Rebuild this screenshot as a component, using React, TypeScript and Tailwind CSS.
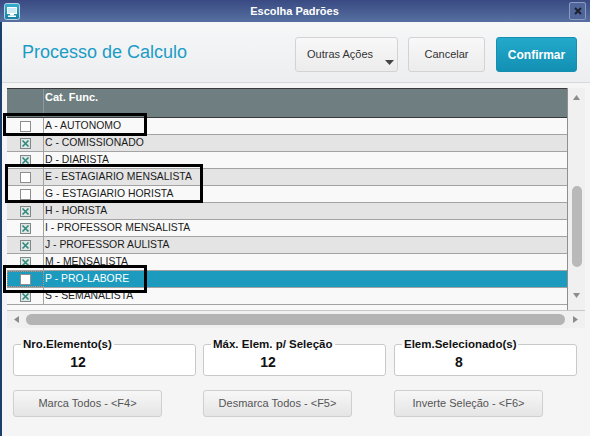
import React from "react";

type Row = { label: string; checked: boolean; selected?: boolean };

const rows: Row[] = [
  { label: "A - AUTONOMO", checked: false },
  { label: "C - COMISSIONADO", checked: true },
  { label: "D - DIARISTA", checked: true },
  { label: "E - ESTAGIARIO MENSALISTA", checked: false },
  { label: "G - ESTAGIARIO HORISTA", checked: false },
  { label: "H - HORISTA", checked: true },
  { label: "I - PROFESSOR MENSALISTA", checked: true },
  { label: "J - PROFESSOR AULISTA", checked: true },
  { label: "M - MENSALISTA", checked: true },
  { label: "P - PRO-LABORE", checked: false, selected: true },
  { label: "S - SEMANALISTA", checked: true },
];

function CheckBox({ checked }: { checked: boolean }) {
  return (
    <svg width="11" height="11" viewBox="0 0 11 11">
      <rect
        x="0.5"
        y="0.5"
        width="10"
        height="10"
        fill={checked ? "#e1e5e4" : "#ffffff"}
        stroke={checked ? "#7b8a89" : "#8e8e8e"}
      />
      {checked && (
        <path d="M2.5 2.5 L8.5 8.5 M8.5 2.5 L2.5 8.5" stroke="#2c8a7c" strokeWidth="1.6" />
      )}
    </svg>
  );
}

function WindowIcon() {
  return (
    <svg width="16" height="17" viewBox="0 0 16 17">
      <defs>
        <linearGradient id="wi" x1="0" y1="0" x2="0" y2="1">
          <stop offset="0" stopColor="#35b0cf" />
          <stop offset="1" stopColor="#1780a3" />
        </linearGradient>
      </defs>
      <rect x="0.5" y="0.5" width="15" height="16" rx="2" fill="url(#wi)" stroke="#b9d3e3" />
      <rect x="3" y="4" width="10" height="7" fill="#ffffff" />
      <rect x="4" y="5" width="8" height="5" fill="#cfeaf3" />
      <rect x="6" y="11" width="4" height="1.5" fill="#ffffff" />
      <rect x="4" y="12.5" width="8" height="1.5" fill="#ffffff" />
    </svg>
  );
}

function CloseButton() {
  return (
    <div className="w-[17px] h-[18px] rounded-[2px] border border-[#8d9abf] bg-[#50659a] flex items-center justify-center">
      <svg width="8" height="8" viewBox="0 0 8 8">
        <path d="M1 1 L7 7 M7 1 L1 7" stroke="#1c2130" strokeWidth="2" />
      </svg>
    </div>
  );
}

function Triangle({ dir }: { dir: "up" | "down" | "left" | "right" }) {
  const paths: Record<string, string> = {
    up: "M0 5 L3.5 0 L7 5 Z",
    down: "M0 0 L7 0 L3.5 5 Z",
    left: "M5 0 L5 7 L0 3.5 Z",
    right: "M0 0 L5 3.5 L0 7 Z",
  };
  const vertical = dir === "up" || dir === "down";
  return (
    <svg width={vertical ? 7 : 5} height={vertical ? 5 : 7} viewBox={vertical ? "0 0 7 5" : "0 0 5 7"}>
      <path d={paths[dir]} fill="#8c8c8c" />
    </svg>
  );
}

function CountBox({ title, value }: { title: string; value: string }) {
  return (
    <fieldset className="w-[183px] border border-[#c9c9c9] rounded-[3px] bg-white px-[7px]">
      <legend className="px-[2px] text-[11.5px] leading-[14px] font-bold text-[#111]">{title}</legend>
      <div className="-ml-[7px] w-[128px] h-[17px] mt-[3px] mb-[4px] text-center text-[14px] leading-[17px] font-bold text-[#111]">
        {value}
      </div>
    </fieldset>
  );
}

function FooterButton({ children }: { children: React.ReactNode }) {
  return (
    <div className="w-[149px] h-[27px] rounded-[3px] border border-[#cfcfcf] bg-linear-to-b from-[#f7f7f7] to-[#e5e5e5] flex items-center justify-center text-[11px] text-[#555]">
      {children}
    </div>
  );
}

export default function App() {
  return (
    <div className="relative w-[590px] h-[436px] overflow-hidden flex flex-col bg-[#f5f5f5] font-['Liberation_Sans',Arial,sans-serif]">
      {/* window title bar */}
      <div className="h-[22px] shrink-0 flex items-center px-[4px] bg-linear-to-b from-[#394a82] to-[#5770a1]">
        <WindowIcon />
        <div className="flex-1 text-center text-white font-bold text-[11px] leading-none">Escolha Padrões</div>
        <CloseButton />
      </div>

      <div className="flex-1 flex flex-col border-l-2 border-[#1c3f6e]">
        {/* page header */}
        <div className="h-[61px] shrink-0 flex items-start pt-[15px] pl-[20px] pr-[13px] bg-linear-to-b from-[#f6f7f7] to-[#eceef0] border-b border-[#d6d8d9]">
          <div className="mt-[5px] text-[18px] leading-[21px] text-[#1b9cc5]">Processo de Calculo</div>
          <div className="ml-auto flex items-start">
            <div className="relative w-[103px] h-[35px] rounded-[3px] border border-[#d3d3d3] bg-linear-to-b from-[#f8f8f8] to-[#ececec] flex items-center pl-[11px] text-[11px] text-[#333]">
              Outras Ações
              <svg className="absolute right-[3px] bottom-[6px]" width="9" height="5" viewBox="0 0 9 5">
                <path d="M0 0 L9 0 L4.5 5 Z" fill="#444" />
              </svg>
            </div>
            <div className="ml-[10px] w-[77px] h-[35px] rounded-[3px] border border-[#d3d3d3] bg-linear-to-b from-[#f8f8f8] to-[#ececec] flex items-center justify-center text-[11px] text-[#333]">
              Cancelar
            </div>
            <div className="ml-[11px] w-[81px] h-[35px] rounded-[3px] border border-[#1590b3] bg-linear-to-b from-[#23a9cb] to-[#1290b4] flex items-center justify-center text-[12px] font-bold text-white">
              Confirmar
            </div>
          </div>
        </div>

        {/* data grid */}
        <div className="ml-[5px] mt-[5px] w-[578px] flex flex-col">
          <div className="flex h-[222px]">
            <div className="w-[561px] flex flex-col border-r border-[#8f8f8f]">
              <div className="h-[30px] shrink-0 flex bg-[#6f7f81] border-t border-b border-[#3a3a3a]">
                <div className="w-[37px] border-r border-[#8c9a9b]" />
                <div className="pl-[1px] pt-[2px] text-[11px] font-bold text-white leading-[13px]">Cat. Func.</div>
              </div>
              {rows.map((r, i) => {
                const bg = r.selected ? "bg-[#1c9bbe]" : i % 2 === 0 ? "bg-[#f9f9f9]" : "bg-[#e4e4e4]";
                return (
                  <div key={r.label} className={`h-[17px] shrink-0 flex border-b border-[#a3a3a3] ${bg}`}>
                    <div
                      className={
                        r.selected
                          ? "w-[37px] flex items-center justify-center border border-dotted border-[#d9866a]"
                          : "w-[37px] flex items-center justify-center border-r border-[#a3a3a3]"
                      }
                    >
                      <CheckBox checked={r.checked} />
                    </div>
                    <div
                      className={
                        r.selected
                          ? "pl-[1px] pt-[1px] flex items-center text-[10.4px] leading-none text-white"
                          : "pl-[1px] pt-[1px] flex items-center text-[10.4px] leading-none text-[#1a1a1a]"
                      }
                    >
                      {r.label}
                    </div>
                  </div>
                );
              })}
              <div className="flex-1 bg-[#f9f9f9]" />
            </div>
            {/* vertical scrollbar */}
            <div className="w-[17px] bg-[#f0f0f0] flex flex-col items-center">
              <div className="h-[18px] flex items-center justify-center">
                <Triangle dir="up" />
              </div>
              <div className="mt-[80px] w-[10px] h-[81px] rounded-full bg-[#b9b9b9]" />
              <div className="flex-1" />
              <div className="h-[18px] mb-[6px] flex items-center justify-center">
                <Triangle dir="down" />
              </div>
            </div>
          </div>
          {/* horizontal scrollbar */}
          <div className="h-[18px] flex items-center bg-[#f0f0f0] border-t border-[#c8c8c8]">
            <div className="w-[19px] flex justify-center">
              <Triangle dir="left" />
            </div>
            <div className="w-[539px] h-[11px] rounded-full bg-[#b4b4b4]" />
            <div className="flex-1 flex justify-center">
              <Triangle dir="right" />
            </div>
          </div>
        </div>

        {/* counters */}
        <div className="ml-[11px] mt-[9px] flex gap-[7px]">
          <CountBox title="Nro.Elemento(s)" value="12" />
          <CountBox title="Máx. Elem. p/ Seleção" value="12" />
          <div className="ml-px">
            <CountBox title="Elem.Selecionado(s)" value="8" />
          </div>
        </div>

        {/* selection actions */}
        <div className="ml-[11px] mt-[14px] flex">
          <FooterButton>Marca Todos - &lt;F4&gt;</FooterButton>
          <div className="ml-[41px]">
            <FooterButton>Desmarca Todos - &lt;F5&gt;</FooterButton>
          </div>
          <div className="ml-[42px]">
            <FooterButton>Inverte Seleção - &lt;F6&gt;</FooterButton>
          </div>
        </div>
      </div>

      {/* highlight frames drawn over the grid */}
      <div className="absolute left-[3px] top-[113px] w-[144px] h-[23px] border-[3px] border-black" />
      <div className="absolute left-[5px] top-[164px] w-[198px] h-[39px] border-[3px] border-black" />
      <div className="absolute left-[3px] top-[265px] w-[144px] h-[28px] border-[3px] border-black" />
    </div>
  );
}
